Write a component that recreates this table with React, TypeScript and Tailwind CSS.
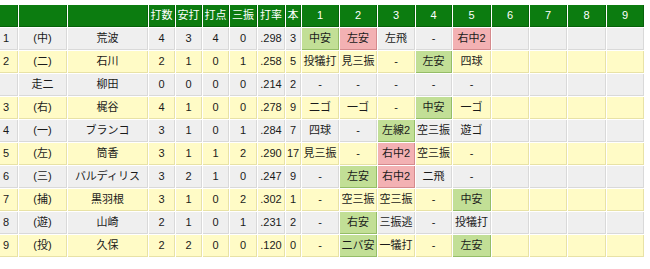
import React from "react";

type Tone = "g" | "r" | "";

type Row = {
  order: string;
  pos: string;
  name: string;
  stats: string[];
  innings: [string, Tone][];
};

const rows: Row[] = [
  { order: "1", pos: "(中)", name: "荒波", stats: ["4", "3", "4", "0", ".298", "3"], innings: [["中安", "g"], ["左安", "r"], ["左飛", ""], ["-", ""], ["右中2", "r"]] },
  { order: "2", pos: "(二)", name: "石川", stats: ["2", "1", "0", "1", ".258", "5"], innings: [["投犠打", ""], ["見三振", ""], ["-", ""], ["左安", "g"], ["四球", ""]] },
  { order: "", pos: "走二", name: "柳田", stats: ["0", "0", "0", "0", ".214", "2"], innings: [["-", ""], ["-", ""], ["-", ""], ["-", ""], ["-", ""]] },
  { order: "3", pos: "(右)", name: "梶谷", stats: ["4", "1", "0", "0", ".278", "9"], innings: [["二ゴ", ""], ["一ゴ", ""], ["-", ""], ["中安", "g"], ["一ゴ", ""]] },
  { order: "4", pos: "(一)", name: "ブランコ", stats: ["3", "1", "0", "1", ".284", "7"], innings: [["四球", ""], ["-", ""], ["左線2", "g"], ["空三振", ""], ["遊ゴ", ""]] },
  { order: "5", pos: "(左)", name: "筒香", stats: ["3", "1", "1", "2", ".290", "17"], innings: [["見三振", ""], ["-", ""], ["右中2", "r"], ["空三振", ""], ["-", ""]] },
  { order: "6", pos: "(三)", name: "バルディリス", stats: ["3", "2", "1", "0", ".247", "9"], innings: [["-", ""], ["左安", "g"], ["右中2", "r"], ["二飛", ""], ["-", ""]] },
  { order: "7", pos: "(捕)", name: "黒羽根", stats: ["3", "1", "0", "2", ".302", "1"], innings: [["-", ""], ["空三振", ""], ["空三振", ""], ["-", ""], ["中安", "g"]] },
  { order: "8", pos: "(遊)", name: "山崎", stats: ["2", "1", "0", "1", ".231", "2"], innings: [["-", ""], ["右安", "g"], ["三振逃", ""], ["-", ""], ["投犠打", ""]] },
  { order: "9", pos: "(投)", name: "久保", stats: ["2", "2", "0", "0", ".120", "0"], innings: [["-", ""], ["二バ安", "g"], ["一犠打", ""], ["-", ""], ["左安", "g"]] },
];

const headers = ["", "", "", "打数", "安打", "打点", "三振", "打率", "本", "1", "2", "3", "4", "5", "6", "7", "8", "9"];

const rowTone = {
  gray: "bg-[#efefef] border-[#d9d9d9]",
  yellow: "bg-[#fffbc6] border-[#e8e2a6]",
};

const hitTone = {
  g: "bg-[#c2df96] border-[#95bd67]",
  r: "bg-[#f3b1b3] border-[#d58a8d]",
};

function Cell({ text, tone, left }: { text: string; tone: string; left?: boolean }) {
  return (
    <div
      className={`flex items-center border-r border-b ${tone} ${
        left ? "justify-start pl-[3px]" : "justify-center"
      } whitespace-nowrap`}
    >
      {text}
    </div>
  );
}

export default function App() {
  return (
    <div
      className="bg-white w-[650px] h-[269px] pt-[5px] text-[11px] text-[#1a1a1a] leading-none"
      style={{ fontFamily: '"Liberation Sans", "Noto Sans CJK JP", sans-serif' }}
    >
      <div className="grid grid-cols-[18px_48px_80px_26px_26px_26px_27px_27px_15px_37px_37px_37px_36px_38px_37px_37px_38px_37px] auto-rows-[22px] gap-px w-[644px]">
        {headers.map((h, i) => (
          <div
            key={"h" + i}
            className="flex items-center justify-center bg-[#0c7c10] border-r border-b border-[#06620a] text-white"
          >
            {h}
          </div>
        ))}
        {rows.map((row, ri) => {
          const base = ri % 2 === 0 ? rowTone.gray : rowTone.yellow;
          return (
            <React.Fragment key={ri}>
              <Cell text={row.order} tone={base} left />
              <Cell text={row.pos} tone={base} />
              <Cell text={row.name} tone={base} />
              {row.stats.map((s, si) => (
                <Cell key={"s" + si} text={s} tone={base} />
              ))}
              {row.innings.map(([t, tone], ii) => (
                <Cell key={"i" + ii} text={t} tone={tone ? hitTone[tone] : base} />
              ))}
              {[6, 7, 8, 9].map((n) => (
                <Cell key={"e" + n} text="" tone={base} />
              ))}
            </React.Fragment>
          );
        })}
      </div>
    </div>
  );
}
